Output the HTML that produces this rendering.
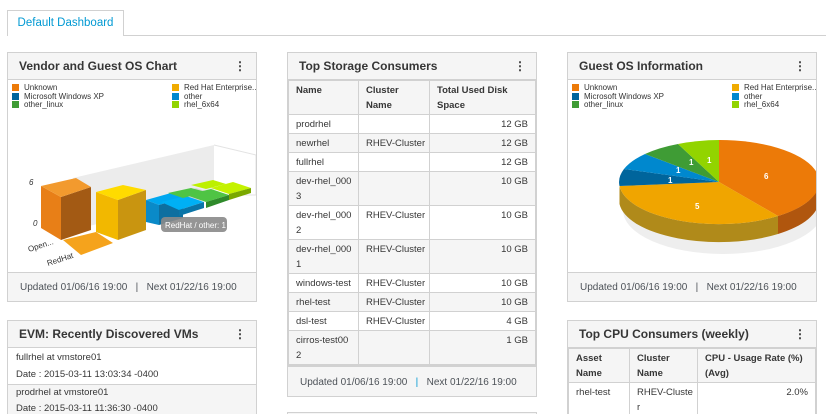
<!DOCTYPE html>
<html><head><meta charset="utf-8"><style>
*{box-sizing:border-box;margin:0;padding:0}
html,body{width:828px;height:414px;overflow:hidden}
body{background:#fff;font-family:"Liberation Sans",sans-serif;color:#363636;font-size:10px;position:relative}
.tabline{position:absolute;left:7px;right:2px;top:35px;border-top:1px solid #d1d1d1}
.tab{position:absolute;left:7px;top:10px;width:117px;height:26px;border:1px solid #d1d1d1;border-bottom:none;background:#fff;color:#0099d3;font-size:11.5px;text-align:center;line-height:25px}
.panel{position:absolute;border:1px solid #d1d1d1;background:#f5f5f5;overflow:hidden}
.hd{height:27px;line-height:27px;padding-left:11px;font-weight:bold;font-size:12px;color:#363636;border-bottom:1px solid #d1d1d1;position:relative;white-space:nowrap}
.hd .k{position:absolute;right:10px;top:0;font-size:12px}
.body{background:#fff}
.ft{height:29px;line-height:29px;padding-left:12px;font-size:10px;color:#4d5258;white-space:nowrap}
table{border-collapse:collapse;width:100%;font-size:9.5px;table-layout:fixed}
td,th{border:1px solid #d1d1d1;padding:2px 7px 1px;vertical-align:top;line-height:15px;text-align:left;white-space:nowrap;overflow:hidden}
th{font-weight:bold;background:#f5f5f5}
tr.w td{background:#fff}
tr.g td{background:#f5f5f5}
td.r{text-align:right}
.leg{position:absolute;font-size:8px;line-height:8.5px;color:#333;white-space:nowrap}
.leg i{display:inline-block;width:7px;height:7px;margin-right:5px;vertical-align:-1px}
</style></head><body>
<div class="tabline"></div>
<div class="tab">Default Dashboard</div>

<div class="panel" style="left:7px;top:52px;width:250px;height:250px">
<div class="hd">Vendor and Guest OS Chart<span class="k">⋮</span></div>
<div class="body" style="height:192px;position:relative">
<div class="leg" style="left:4px;top:4px"><div><i style="background:#ec7a08"></i>Unknown</div><div><i style="background:#00659c"></i>Microsoft Windows XP</div><div><i style="background:#3f9c35"></i>other_linux</div></div>
<div class="leg" style="left:164px;top:4px"><div><i style="background:#f0ab00"></i>Red Hat Enterprise...</div><div><i style="background:#0088ce"></i>other</div><div><i style="background:#92d400"></i>rhel_6x64</div></div>
<svg width="250" height="192" style="position:absolute;left:0;top:0" viewBox="7 80 250 192">
<polygon points="72,178 213,145 213,195 72,230" fill="#ececec"/>
<polyline points="213,145 255,155 255,195 213,195" fill="none" stroke="#e3e3e3"/>
<polygon points="165,196 195,188 218,195 188,205" fill="#d5d5d5"/>
<polygon points="62,240 95,232 112,243 80,255" fill="#f5a31c"/>
<polygon points="40,186 60,197 60,240 40,228" fill="#e87f17"/>
<polygon points="60,197 90,187 90,230 60,240" fill="#a35a14"/>
<polygon points="40,186 75,178 90,187 60,197" fill="#f29a2e"/>
<polygon points="95,192 117,200 117,240 95,232" fill="#f2b800"/>
<polygon points="117,200 145,190 145,230 117,240" fill="#c99510"/>
<polygon points="95,192 122,185 145,190 117,200" fill="#ffdb00"/>
<polygon points="145,200 170,193 182,198 158,205" fill="#00a8f0"/>
<polygon points="145,200 158,205 158,225 145,222" fill="#0a8ac8"/>
<polygon points="158,205 182,198 182,218 158,225" fill="#0d6fa0"/>
<polygon points="160,202 185,196 203,202 178,210" fill="#00b0f5"/>
<polygon points="178,210 203,202 203,208 178,216" fill="#0a75a8"/>
<polygon points="167,193 190,188 205,192 182,198" fill="#4fc444"/>
<polygon points="185,195 210,189 228,195 205,202" fill="#4fc444"/>
<polygon points="205,202 228,195 228,200 205,208" fill="#2f8a2b"/>
<polygon points="190,185 212,180 225,184 205,189" fill="#bdf000"/>
<polygon points="210,188 232,182 250,188 228,194" fill="#c4f200"/>
<polygon points="228,194 250,188 250,193 228,200" fill="#7aa800"/>
<rect x="160" y="217" width="66" height="15" rx="4" fill="#8a8a8a" opacity=".9"/>
<text x="164" y="228" font-size="8" fill="#fff" font-family="Liberation Sans">RedHat / other: 1</text>
<text x="28" y="185" font-size="8" font-style="italic" fill="#333">6</text>
<text x="32" y="226" font-size="8" font-style="italic" fill="#333">0</text>
<text x="28" y="252" font-size="8" fill="#333" transform="rotate(-18 28 252)">Open...</text>
<text x="47" y="266" font-size="8" fill="#333" transform="rotate(-18 47 266)">RedHat</text>
</svg>
</div>
<div class="ft" style="border-top:1px solid #d1d1d1">Updated 01/06/16 19:00 &nbsp; | &nbsp; Next 01/22/16 19:00</div>
</div>

<div class="panel" style="left:7px;top:320px;width:250px;height:100px">
<div class="hd">EVM: Recently Discovered VMs<span class="k">⋮</span></div>
<div style="background:#fff;padding:1px 8px;line-height:17px;font-size:9.5px;border-bottom:1px solid #d1d1d1">fullrhel at vmstore01<br>Date : 2015-03-11 13:03:34 -0400</div>
<div style="background:#f5f5f5;padding:0 8px;line-height:16px;font-size:9.5px">prodrhel at vmstore01<br>Date : 2015-03-11 11:36:30 -0400</div>
</div>

<div class="panel" style="left:287px;top:52px;width:250px;height:345px">
<div class="hd">Top Storage Consumers<span class="k">⋮</span></div>
<table>
<colgroup><col style="width:70px"><col style="width:71px"><col></colgroup>
<tr><th>Name</th><th>Cluster<br>Name</th><th>Total Used Disk<br>Space</th></tr>
<tr class="w"><td>prodrhel</td><td></td><td class="r">12 GB</td></tr>
<tr class="g"><td>newrhel</td><td>RHEV-Cluster</td><td class="r">12 GB</td></tr>
<tr class="w"><td>fullrhel</td><td></td><td class="r">12 GB</td></tr>
<tr class="g"><td>dev-rhel_000<br>3</td><td></td><td class="r">10 GB</td></tr>
<tr class="w"><td>dev-rhel_000<br>2</td><td>RHEV-Cluster</td><td class="r">10 GB</td></tr>
<tr class="g"><td>dev-rhel_000<br>1</td><td>RHEV-Cluster</td><td class="r">10 GB</td></tr>
<tr class="w"><td>windows-test</td><td>RHEV-Cluster</td><td class="r">10 GB</td></tr>
<tr class="g"><td>rhel-test</td><td>RHEV-Cluster</td><td class="r">10 GB</td></tr>
<tr class="w"><td>dsl-test</td><td>RHEV-Cluster</td><td class="r">4 GB</td></tr>
<tr class="g"><td>cirros-test00<br>2</td><td></td><td class="r">1 GB</td></tr>
</table>
<div class="ft" style="border-top:2px solid #d1d1d1;height:32px;line-height:31px">Updated 01/06/16 19:00 &nbsp; <span style="color:#0099d3">|</span> &nbsp; Next 01/22/16 19:00</div>
</div>
<div class="panel" style="left:287px;top:412px;width:250px;height:10px"></div>

<div class="panel" style="left:567px;top:52px;width:250px;height:250px">
<div class="hd">Guest OS Information<span class="k">⋮</span></div>
<div class="body" style="height:192px;position:relative">
<div class="leg" style="left:4px;top:4px"><div><i style="background:#ec7a08"></i>Unknown</div><div><i style="background:#00659c"></i>Microsoft Windows XP</div><div><i style="background:#3f9c35"></i>other_linux</div></div>
<div class="leg" style="left:164px;top:4px"><div><i style="background:#f0ab00"></i>Red Hat Enterprise...</div><div><i style="background:#0088ce"></i>other</div><div><i style="background:#92d400"></i>rhel_6x64</div></div>
<svg width="250" height="192" style="position:absolute;left:0;top:0" viewBox="567 80 250 192" font-family="Liberation Sans" font-size="8" font-weight="bold" fill="#fff">
<ellipse cx="722" cy="210" rx="100" ry="44" fill="#eee"/>
<path d="M618.5,186 L618.5,204 A100,42 0 0 0 777,234 L777,216 A100,42 0 0 1 618.5,186Z" fill="#b08a1a"/>
<path d="M777,216 L777,234 A100,42 0 0 0 818,200 L818,182 A100,42 0 0 1 777,216Z" fill="#b0560e"/>
<path d="M718,182 L718,140 A100,42 0 0 1 777,216Z" fill="#ec7a08"/>
<path d="M718,182 L777,216 A100,42 0 0 1 618.5,186Z" fill="#f0a500"/>
<path d="M718,182 L618.5,186 A100,42 0 0 1 623,169Z" fill="#00659c"/>
<path d="M718,182 L623,169 A100,42 0 0 1 644,154Z" fill="#0088ce"/>
<path d="M718,182 L644,154 A100,42 0 0 1 677,144Z" fill="#3f9c35"/>
<path d="M718,182 L677,144 A100,42 0 0 1 718,140Z" fill="#92d400"/>
<text x="763" y="179">6</text><text x="694" y="209">5</text>
<text x="667" y="183">1</text><text x="675" y="173">1</text><text x="688" y="165">1</text><text x="706" y="163">1</text>
</svg>
</div>
<div class="ft" style="border-top:1px solid #d1d1d1">Updated 01/06/16 19:00 &nbsp; | &nbsp; Next 01/22/16 19:00</div>
</div>

<div class="panel" style="left:567px;top:320px;width:250px;height:100px">
<div class="hd">Top CPU Consumers (weekly)<span class="k">⋮</span></div>
<table>
<colgroup><col style="width:61px"><col style="width:68px"><col></colgroup>
<tr><th>Asset<br>Name</th><th>Cluster<br>Name</th><th>CPU - Usage Rate (%)<br>(Avg)</th></tr>
<tr class="w"><td>rhel-test</td><td>RHEV-Cluste<br>r</td><td class="r">2.0%</td></tr>
</table>
</div>
</body></html>
